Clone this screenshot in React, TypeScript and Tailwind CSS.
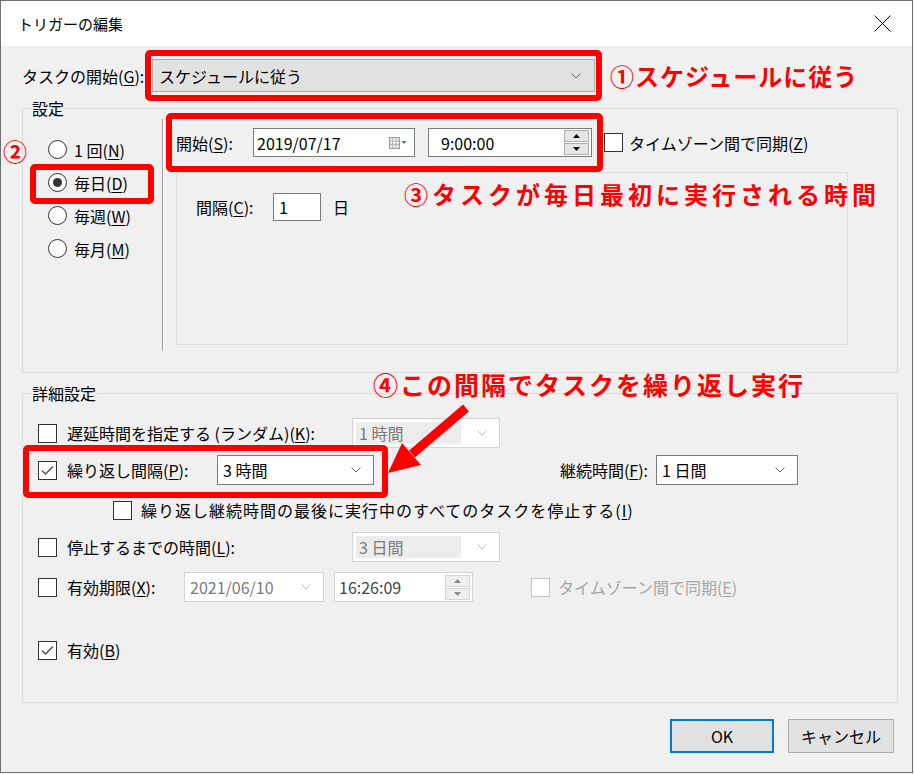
import React from "react";

const U = ({ c }: { c: string }) => <span className="underline underline-offset-2">{c}</span>;

const Chevron = ({ color = "#606060" }: { color?: string }) => (
  <svg width="10" height="6" viewBox="0 0 10 6" className="shrink-0">
    <path d="M0.5 0.5 L5 5 L9.5 0.5" fill="none" stroke={color} strokeWidth="1" />
  </svg>
);

const Checkbox = ({ checked = false, disabled = false }: { checked?: boolean; disabled?: boolean }) => (
  <div
    className={
      "w-[19px] h-[19px] shrink-0 bg-white border flex items-center justify-center " +
      (disabled ? "border-[#c4c4c4]" : "border-[#333333]")
    }
  >
    {checked && (
      <svg width="15" height="15" viewBox="0 0 15 15">
        <path d="M2 7.5 L5.5 11 L13 3.5" fill="none" stroke="#4a4a4a" strokeWidth="1.3" />
      </svg>
    )}
  </div>
);

const Radio = ({ checked = false }: { checked?: boolean }) => (
  <div className="w-[19px] h-[19px] shrink-0 rounded-full bg-white border border-[#333333] flex items-center justify-center">
    {checked && <div className="w-[9px] h-[9px] rounded-full bg-[#333333]" />}
  </div>
);

const Spinner = ({ disabled = false }: { disabled?: boolean }) => (
  <div className="flex flex-col gap-[1px] w-[25px] shrink-0">
    <div className={"h-[12px] border flex items-center justify-center " + (disabled ? "border-[#d6d6d6] bg-[#efefef]" : "border-[#adadad] bg-[#e5e5e5]")}>
      <svg width="7" height="4" viewBox="0 0 7 4"><path d="M0 4 L3.5 0 L7 4 Z" fill={disabled ? "#8a8a8a" : "#000"} /></svg>
    </div>
    <div className={"h-[12px] border flex items-center justify-center " + (disabled ? "border-[#d6d6d6] bg-[#efefef]" : "border-[#adadad] bg-[#e5e5e5]")}>
      <svg width="7" height="4" viewBox="0 0 7 4"><path d="M0 0 L3.5 4 L7 0 Z" fill={disabled ? "#8a8a8a" : "#000"} /></svg>
    </div>
  </div>
);

const CalIcon = () => (
  <svg width="18" height="12" viewBox="0 0 18 12" className="shrink-0">
    <rect x="0.5" y="0.5" width="10" height="11" fill="#e8e8e8" stroke="#9a9a9a" />
    <path d="M3.5 1 V11 M7 1 V11 M1 4 H10 M1 7.5 H10" stroke="#b8b8b8" strokeWidth="1" />
    <path d="M12.5 4 L17.5 4 L15 7 Z" fill="#4a6fa5" />
  </svg>
);

const DisabledCombo = ({ text, w }: { text: string; w: string }) => (
  <div className={"h-[30px] bg-white border border-[#d4d4d4] flex items-center pl-[3px] pr-[12px] " + w}>
    <div className="flex-1 h-[22px] bg-[#ececec] text-[#7a7a7a] flex items-center pl-[3px] mr-[16px]">{text}</div>
    <Chevron color="#c0c0c0" />
  </div>
);

const Combo = ({ text, w }: { text: string; w: string }) => (
  <div className={"h-[30px] bg-white border border-[#7a7a7a] flex items-center pl-[5px] pr-[12px] " + w}>
    <div className="flex-1">{text}</div>
    <Chevron />
  </div>
);

const RedBox = ({ cls }: { cls: string }) => (
  <div className={"absolute border-[6px] border-[#ff0000] rounded-[5px] pointer-events-none " + cls} />
);

export default function App() {
  return (
    <div className="w-[914px] h-[774px] bg-[#f3f3f3] font-['Noto_Sans_CJK_JP',sans-serif] text-[16px] text-black leading-none">
      <div className="relative w-[913px] h-[773px] border border-[#6f6f6f] bg-[#f0f0f0] flex flex-col">
        {/* Title bar */}
        <div className="h-[45px] bg-white flex items-center justify-between pl-[17px] pr-[21px] shrink-0">
          <span className="text-[15px]">トリガーの編集</span>
          <svg width="17" height="17" viewBox="0 0 17 17">
            <path d="M0.5 0.5 L16.5 16.5 M16.5 0.5 L0.5 16.5" stroke="#000" strokeWidth="1" />
          </svg>
        </div>

        {/* Body */}
        <div className="flex-1 flex flex-col pl-[21px] pr-[14px] pt-[13px]">
          {/* Row 1 */}
          <div className="flex items-center h-[33px]">
            <div className="w-[130px]">タスクの開始(<U c="G" />):</div>
            <div className="w-[443px] h-[33px] bg-[#e1e1e1] border border-[#adadad] flex items-center pl-[6px] pr-[13px]">
              <div className="flex-1">スケジュールに従う</div>
              <Chevron />
            </div>
          </div>

          {/* Settings group */}
          <div className="relative mt-[16px] h-[265px] border border-[#dcdcdc] flex shrink-0">
            <div className="absolute left-[8px] -top-[11px] px-[1px] bg-[#f0f0f0] leading-[20px]">設定</div>
            {/* Radios */}
            <div className="w-[139px] pl-[25px] pt-[24px] flex flex-col">
              <div className="h-[33px] flex items-center gap-[7px]"><Radio /><span>1 回(<U c="N" />)</span></div>
              <div className="h-[33px] flex items-center gap-[7px]"><Radio checked /><span>毎日(<U c="D" />)</span></div>
              <div className="h-[33px] flex items-center gap-[7px]"><Radio /><span>毎週(<U c="W" />)</span></div>
              <div className="h-[33px] flex items-center gap-[7px]"><Radio /><span>毎月(<U c="M" />)</span></div>
            </div>
            {/* Separator */}
            <div className="mt-[10px] h-[232px] w-[2px] border-l border-[#a0a0a0] border-r border-r-white" />
            {/* Right */}
            <div className="flex flex-col pl-[12px] pt-[19px]">
              <div className="flex items-center h-[29px]">
                <div className="w-[77px]">開始(<U c="S" />):</div>
                <div className="w-[162px] h-[29px] bg-white border border-[#7a7a7a] flex items-center pl-[3px] pr-[7px]">
                  <div className="flex-1">2019/07/17</div>
                  <CalIcon />
                </div>
                <div className="ml-[13px] w-[164px] h-[29px] bg-white border border-[#7a7a7a] flex items-center pl-[12px] pr-[2px]">
                  <div className="flex-1">9:00:00</div>
                  <Spinner />
                </div>
                <div className="ml-[12px]"><Checkbox /></div>
                <div className="ml-[6px]">タイムゾーン間で同期(<U c="Z" />)</div>
              </div>
              <div className="mt-[15px] w-[672px] h-[173px] border border-[#dcdcdc] pt-[20px] pl-[19px]">
                <div className="flex items-center h-[28px]">
                  <div className="w-[77px]">間隔(<U c="C" />):</div>
                  <div className="w-[48px] h-[28px] bg-white border border-[#7a7a7a] flex items-center pl-[5px]">1</div>
                  <div className="ml-[12px]">日</div>
                </div>
              </div>
            </div>
          </div>

          {/* Advanced group */}
          <div className="relative mt-[20px] h-[310px] border border-[#dcdcdc] flex flex-col pl-[15px] shrink-0">
            <div className="absolute left-[8px] -top-[11px] px-[1px] bg-[#f0f0f0] leading-[20px]">詳細設定</div>
            <div className="mt-[24px] h-[30px] flex items-center">
              <Checkbox />
              <div className="ml-[10px] w-[285px]">遅延時間を指定する (ランダム)(<U c="K" />):</div>
              <DisabledCombo text="1 時間" w="w-[148px]" />
            </div>
            <div className="mt-[7px] h-[30px] flex items-center">
              <Checkbox checked />
              <div className="ml-[10px] w-[150px]">繰り返し間隔(<U c="P" />):</div>
              <Combo text="3 時間" w="w-[157px]" />
              <div className="w-[282px] text-right pr-[8px]">継続時間(<U c="F" />):</div>
              <Combo text="1 日間" w="w-[142px]" />
            </div>
            <div className="mt-[15px] h-[20px] flex items-center pl-[75px]">
              <Checkbox />
              <div className="ml-[9px] tracking-[1px]">繰り返し継続時間の最後に実行中のすべてのタスクを停止する(<U c="I" />)</div>
            </div>
            <div className="mt-[12px] h-[30px] flex items-center">
              <Checkbox />
              <div className="ml-[10px] w-[285px]">停止するまでの時間(<U c="L" />):</div>
              <DisabledCombo text="3 日間" w="w-[148px]" />
            </div>
            <div className="mt-[10px] h-[30px] flex items-center">
              <Checkbox />
              <div className="ml-[10px] w-[117px]">有効期限(<U c="X" />):</div>
              <div className="w-[140px] h-[30px] bg-white border border-[#d4d4d4] flex items-center pl-[5px] pr-[12px]">
                <div className="flex-1 text-[#7a7a7a]">2021/06/10</div>
                <Chevron color="#c0c0c0" />
              </div>
              <div className="ml-[10px] w-[139px] h-[30px] bg-white border border-[#d4d4d4] flex items-center pl-[4px] pr-[2px]">
                <div className="flex-1 text-[#444444]">16:26:09</div>
                <Spinner disabled />
              </div>
              <div className="ml-[58px]"><Checkbox disabled /></div>
              <div className="ml-[8px] text-[#a6a6a6]">タイムゾーン間で同期(<U c="E" />)</div>
            </div>
            <div className="mt-[38px] h-[20px] flex items-center">
              <Checkbox checked />
              <div className="ml-[10px]">有効(<U c="B" />)</div>
            </div>
          </div>

          {/* Buttons */}
          <div className="mt-[16px] flex justify-end gap-[14px] pr-[4px]">
            <div className="w-[104px] h-[34px] bg-[#e1e1e1] border-2 border-[#0078d7] flex items-center justify-center">OK</div>
            <div className="w-[106px] h-[34px] bg-[#e1e1e1] border border-[#adadad] flex items-center justify-center">キャンセル</div>
          </div>
        </div>

        {/* Annotation overlays */}
        <RedBox cls="left-[144px] top-[49px] w-[457px] h-[51px]" />
        <RedBox cls="left-[29px] top-[163px] w-[124px] h-[40px]" />
        <RedBox cls="left-[165px] top-[112px] w-[437px] h-[59px]" />
        <RedBox cls="left-[22px] top-[444px] w-[365px] h-[53px]" />

        <div className="absolute left-[609px] top-[60px] leading-[30px] text-[24px] font-bold text-[#ff0000] tracking-[1px] whitespace-nowrap">①スケジュールに従う</div>
        <div className="absolute left-[2px] top-[136px] leading-[28px] text-[24px] font-bold text-[#ff0000]">②</div>
        <div className="absolute left-[403px] top-[178px] leading-[30px] text-[24px] font-bold text-[#ff0000] tracking-[4px] whitespace-nowrap">③タスクが毎日最初に実行される時間</div>
        <div className="absolute left-[372px] top-[368px] leading-[30px] text-[25px] font-bold text-[#ff0000] tracking-[2px] whitespace-nowrap">④この間隔でタスクを繰り返し実行</div>

        <svg className="absolute left-[379px] top-[399px] pointer-events-none" width="95" height="80" viewBox="0 0 95 80">
          <path d="M86 8 L32 54" stroke="#ff0000" strokeWidth="9" />
          <path d="M8 73 L22 43 L41 65 Z" fill="#ff0000" />
        </svg>
      </div>
    </div>
  );
}
